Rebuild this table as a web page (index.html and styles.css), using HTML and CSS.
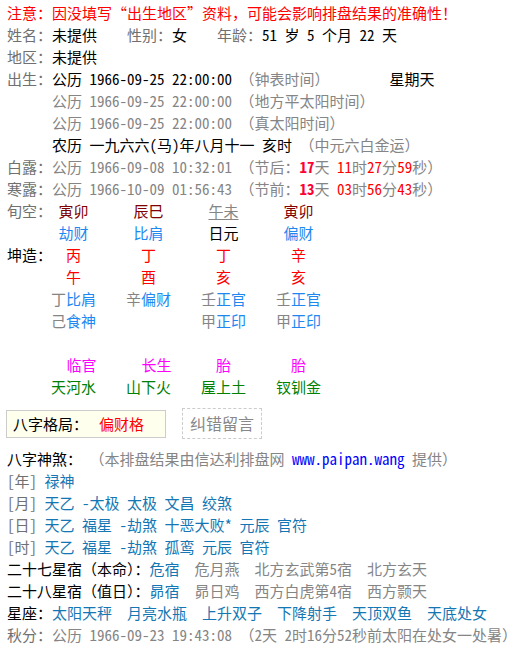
FILE: index.html
```html
<!DOCTYPE html>
<html lang="zh-CN">
<head>
<meta charset="utf-8">
<title>排盘结果</title>
<link rel="stylesheet" href="styles.css">
</head>
<body>
<div class="page">
  <div class="line red">注意：因没填写“出生地区”资料，可能会影响排盘结果的准确性！</div>
  <div class="line">
    <span class="lab">姓名：</span>未提供<span class="lab g30">性别：</span>女<span class="lab g30">年龄：</span>51 岁 5 个月 22 天
  </div>
  <div class="line"><span class="lab">地区：</span>未提供</div>
  <div class="line"><span class="lab">出生：</span>公历 1966-09-25 22:00:00 <span class="gray">（钟表时间）</span><span class="week">星期天</span></div>
  <div class="line indent gray">公历 1966-09-25 22:00:00 （地方平太阳时间）</div>
  <div class="line indent gray">公历 1966-09-25 22:00:00 （真太阳时间）</div>
  <div class="line indent">农历 一九六六(马)年八月十一 亥时 <span class="gray">（中元六白金运）</span></div>
  <div class="line gray"><span class="lab">白露：</span>公历 1966-09-08 10:32:01 （节后：<b class="num">17</b>天 <span class="red">11</span>时<span class="red">27</span>分<span class="red">59</span>秒）</div>
  <div class="line gray"><span class="lab">寒露：</span>公历 1966-10-09 01:56:43 （节前：<b class="num">13</b>天 <span class="red">03</span>时<span class="red">56</span>分<span class="red">43</span>秒）</div>

  <div class="pillars">
    <div class="pl lab">旬空：</div>
    <div class="pc dred">寅卯</div>
    <div class="pc dred">辰巳</div>
    <div class="pc gray ul">午未</div>
    <div class="pc dred">寅卯</div>

    <div class="pl"></div>
    <div class="pc blue">劫财</div>
    <div class="pc blue">比肩</div>
    <div class="pc">日元</div>
    <div class="pc blue">偏财</div>

    <div class="pl">坤造：</div>
    <div class="pc red">丙</div>
    <div class="pc red">丁</div>
    <div class="pc red">丁</div>
    <div class="pc red">辛</div>

    <div class="pl"></div>
    <div class="pc red">午</div>
    <div class="pc red">酉</div>
    <div class="pc red">亥</div>
    <div class="pc red">亥</div>

    <div class="pl"></div>
    <div class="pc"><span class="gray">丁</span><span class="blue">比肩</span></div>
    <div class="pc"><span class="gray">辛</span><span class="blue">偏财</span></div>
    <div class="pc"><span class="gray">壬</span><span class="blue">正官</span></div>
    <div class="pc"><span class="gray">壬</span><span class="blue">正官</span></div>

    <div class="pl"></div>
    <div class="pc"><span class="gray">己</span><span class="blue">食神</span></div>
    <div class="pc"></div>
    <div class="pc"><span class="gray">甲</span><span class="blue">正印</span></div>
    <div class="pc"><span class="gray">甲</span><span class="blue">正印</span></div>

    <div class="pl"></div>
    <div class="pc"></div>
    <div class="pc"></div>
    <div class="pc"></div>
    <div class="pc"></div>

    <div class="pl"></div>
    <div class="pc mag shift">临官</div>
    <div class="pc mag shift">长生</div>
    <div class="pc mag">胎</div>
    <div class="pc mag">胎</div>

    <div class="pl"></div>
    <div class="pc green">天河水</div>
    <div class="pc green">山下火</div>
    <div class="pc green">屋上土</div>
    <div class="pc green">钗钏金</div>
  </div>

  <div class="gejurow">
    <div class="geju">八字格局：<span class="red gejuval">偏财格</span></div>
    <div class="fixbtn">纠错留言</div>
  </div>

  <div class="line">八字神煞：<span class="gray note">（本排盘结果由信达利排盘网 <span class="link">www.paipan.wang</span> 提供）</span></div>
  <div class="line"><span class="lab">[年]</span> <span class="teal">禄神</span></div>
  <div class="line"><span class="lab">[月]</span> <span class="teal">天乙 -太极 太极 文昌 绞煞</span></div>
  <div class="line"><span class="lab">[日]</span> <span class="teal">天乙 福星 -劫煞 十恶大败* 元辰 官符</span></div>
  <div class="line"><span class="lab">[时]</span> <span class="teal">天乙 福星 -劫煞 孤鸾 元辰 官符</span></div>
  <div class="line">二十七星宿（本命）：<span class="teal">危宿</span><span class="gray g15">危月燕</span><span class="gray g15">北方玄武第5宿</span><span class="gray g15">北方玄天</span></div>
  <div class="line">二十八星宿（值日）：<span class="teal">昴宿</span><span class="gray g15">昴日鸡</span><span class="gray g15">西方白虎第4宿</span><span class="gray g15">西方颢天</span></div>
  <div class="line">星座：<span class="teal">太阳天秤</span><span class="teal g15">月亮水瓶</span><span class="teal g15">上升双子</span><span class="teal g15">下降射手</span><span class="teal g15">天顶双鱼</span><span class="teal g15">天底处女</span></div>
  <div class="line gray"><span class="lab">秋分：</span>公历 1966-09-23 19:43:08 （2天 2时16分52秒前太阳在处女一处暑）</div>
</div>
</body>
</html>
```

FILE: styles.css
```css
html, body {
  margin: 0;
  padding: 0;
  background: #ffffff;
}

body {
  font-family: "Noto Sans Mono CJK SC", "Noto Sans CJK SC", sans-serif;
  font-size: 15px;
  color: #000000;
}

.page {
  padding: 2px 0 0 7px;
}

.line {
  height: 22px;
  line-height: 22px;
  white-space: nowrap;
}

.indent {
  padding-left: 45px;
}

.lab {
  color: #707070;
}

.gray {
  color: #858585;
}

.red {
  color: #ff0000;
}

.num {
  color: #ff0033;
  font-weight: bold;
}

.dred {
  color: #800000;
}

.blue {
  color: #1e88f0;
}

.teal {
  color: #1477b4;
}

.mag {
  color: #ff00ff;
}

.green {
  color: #008000;
}

.link {
  color: #0000ff;
}

.ul {
  text-decoration: underline;
  text-underline-offset: 2px;
}

.g30 {
  margin-left: 30px;
}

.g15 {
  margin-left: 15px;
}

.week {
  margin-left: 60px;
}

.note {
  margin-left: 15px;
}

.pillars {
  display: grid;
  grid-template-columns: 29px repeat(4, 75px);
  grid-auto-rows: 22px;
  line-height: 22px;
}

.pl {
  white-space: nowrap;
}

.pc {
  text-align: center;
  white-space: nowrap;
}

.shift {
  padding-left: 16px;
}

.gejurow {
  display: flex;
  align-items: center;
  margin: 10px 0 9px -1px;
  height: 31px;
}

.geju {
  height: 26px;
  line-height: 26px;
  border: 1px solid #cccccc;
  background: #ffffee;
  padding: 0 21px 0 6px;
}

.gejuval {
  margin-left: 11px;
}

.fixbtn {
  margin-left: 16px;
  height: 29px;
  line-height: 29px;
  border: 1px dashed #cccccc;
  padding: 0 7px;
  font-size: 16px;
  color: #888888;
}
```
